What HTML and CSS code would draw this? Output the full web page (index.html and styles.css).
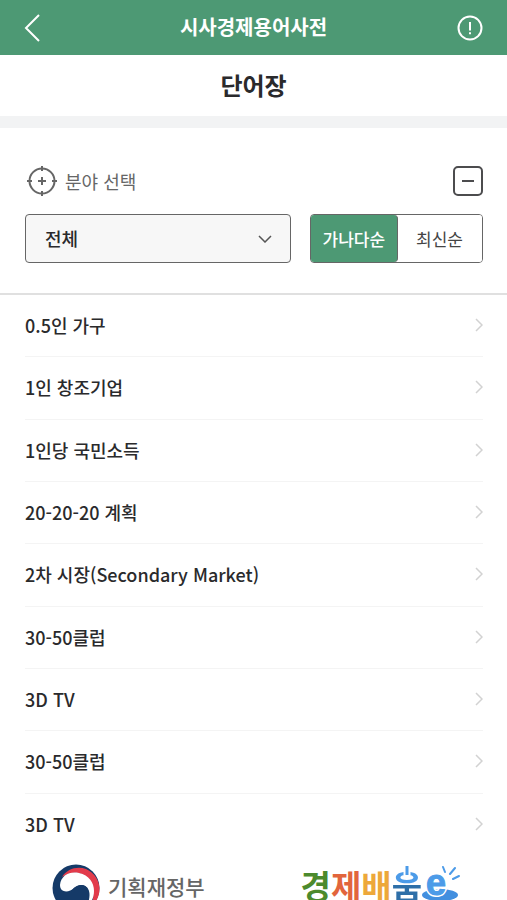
FILE: index.html
```html
<!DOCTYPE html>
<html lang="ko">
<head>
<meta charset="utf-8">
<meta name="viewport" content="width=device-width, initial-scale=1">
<title>시사경제용어사전</title>
<link rel="stylesheet" href="styles.css">
</head>
<body>
<header class="topbar">
  <button class="icon-button" type="button" aria-label="뒤로">
    <svg width="16" height="28" viewBox="0 0 16 28"><path d="M15 1 2 14 15 27"/></svg>
  </button>
  <h1 class="topbar-title">시사경제용어사전</h1>
  <button class="icon-button" type="button" aria-label="안내">
    <svg width="26" height="26" viewBox="0 0 26 26"><circle cx="13" cy="13" r="11.500"/><path d="M13 7v8.500M13 17.200v2"/></svg>
  </button>
</header>
<h2 class="page-title">단어장</h2>
<main class="content">
  <section class="filter">
    <div class="filter-head">
      <svg class="target" width="30" height="32" viewBox="0 0 30 32"><circle cx="15" cy="16" r="12.500"/><path d="M15 1v5M15 26v5M0 16h5M25 16h5M11 16h8M15 12v8"/></svg>
      <label class="filter-label" for="field">분야 선택</label>
      <button class="collapse" type="button" aria-label="접기">
        <svg width="12" height="2" viewBox="0 0 12 2"><path d="M0 1h12"/></svg>
      </button>
    </div>
    <div class="filter-controls">
      <div class="select-box">
        <select id="field" class="select"><option>전체</option></select>
        <svg class="select-arrow" width="14" height="8" viewBox="0 0 14 8"><path d="M1 1l6 6 6-6"/></svg>
      </div>
      <div class="sort">
        <button class="sort-option active" type="button" aria-pressed="true">가나다순</button>
        <button class="sort-option" type="button" aria-pressed="false">최신순</button>
      </div>
    </div>
  </section>
  <ul class="terms">
    <li class="term"><a class="term-link" href="#">0.5인 가구<svg class="chevron" width="8" height="14" viewBox="0 0 8 14"><path d="M1 1l6 6-6 6"/></svg></a></li>
    <li class="term"><a class="term-link" href="#">1인 창조기업<svg class="chevron" width="8" height="14" viewBox="0 0 8 14"><path d="M1 1l6 6-6 6"/></svg></a></li>
    <li class="term"><a class="term-link" href="#">1인당 국민소득<svg class="chevron" width="8" height="14" viewBox="0 0 8 14"><path d="M1 1l6 6-6 6"/></svg></a></li>
    <li class="term"><a class="term-link" href="#">20-20-20 계획<svg class="chevron" width="8" height="14" viewBox="0 0 8 14"><path d="M1 1l6 6-6 6"/></svg></a></li>
    <li class="term"><a class="term-link" href="#">2차 시장(Secondary Market)<svg class="chevron" width="8" height="14" viewBox="0 0 8 14"><path d="M1 1l6 6-6 6"/></svg></a></li>
    <li class="term"><a class="term-link" href="#">30-50클럽<svg class="chevron" width="8" height="14" viewBox="0 0 8 14"><path d="M1 1l6 6-6 6"/></svg></a></li>
    <li class="term"><a class="term-link" href="#">3D TV<svg class="chevron" width="8" height="14" viewBox="0 0 8 14"><path d="M1 1l6 6-6 6"/></svg></a></li>
    <li class="term"><a class="term-link" href="#">30-50클럽<svg class="chevron" width="8" height="14" viewBox="0 0 8 14"><path d="M1 1l6 6-6 6"/></svg></a></li>
    <li class="term"><a class="term-link" href="#">3D TV<svg class="chevron" width="8" height="14" viewBox="0 0 8 14"><path d="M1 1l6 6-6 6"/></svg></a></li>
  </ul>
</main>
<footer class="footer">
  <a class="ministry" href="#">
    <svg width="48" height="48" viewBox="0 0 48 48">
      <circle cx="24" cy="24" r="23.500" fill="#153a68"/>
      <path d="M10 13C15 5 25 2 34 5c9 4 13.500 12 13.500 20 0 7-3 13-8 17 3-10 2-20-3-27C31 8 20 6 10 13z" fill="#e23b4b"/>
      <path d="M8 21C9 11 18 7 27 9c10 2 15 10 15 18 0 7-3 12-7 16 2-7 4-13 1-18-3-5-9-5-14-1-5 5-14 5-14-3z" fill="#fff"/>
      <path d="M20 26c5-6 13-7 16-1 3 7-1 15-7 20l-9-4z" fill="#153a68"/>
    </svg>
    <span class="ministry-name">기획재정부</span>
  </a>
  <a class="learning" href="#">
    <span class="learning-name"><span class="green">경</span><span class="red">제</span><span class="yellow">배</span><span class="blue">움<svg class="power" width="8" height="10" viewBox="0 0 8 10"><path d="M4 0v10" stroke="#fff" stroke-width="7"/><path d="M4 0v9" stroke="#4c9be8" stroke-width="3"/></svg></span></span>
    <svg class="e-mark" width="38" height="42" viewBox="0 0 38 42">
      <ellipse cx="18" cy="31" rx="18" ry="6" fill="#428fdf"/>
      <text class="e-halo" x="4" y="31">e</text>
      <text class="e-letter" x="4" y="31">e</text>
      <path d="M23 8 21 3M28 10l5-6M31 15l6-3" fill="none" stroke="#4c9be8" stroke-width="2" stroke-linecap="round"/>
    </svg>
  </a>
</footer>
</body>
</html>
```
FILE: styles.css
```css
* {
  box-sizing: border-box;
}

body {
  margin: 0;
  height: 100vh;
  display: flex;
  flex-direction: column;
  background: #fff;
  color: #2a2a2c;
  font-family: "Noto Sans CJK KR", "Noto Sans", sans-serif;
  font-size: 18px;
  font-weight: 500;
  line-height: 24px;
}

button,
select {
  font: inherit;
  margin: 0;
}

svg {
  display: block;
  flex: none;
}

.topbar {
  display: flex;
  align-items: center;
  justify-content: space-between;
  flex: none;
  height: 55px;
  padding: 0 24px;
  background: #4d9974;
  color: #fff;
}

.topbar-title {
  margin: 0;
  padding-bottom: 2px;
  font-size: 20px;
  font-weight: 700;
}

.icon-button {
  display: flex;
  width: 26px;
  padding: 0;
  border: 0;
  background: none;
}

.icon-button svg {
  fill: none;
  stroke: #fff;
  stroke-width: 2;
}

.page-title {
  flex: none;
  margin: 0;
  padding: 15px 0 17px;
  border-bottom: 12px solid #f2f3f4;
  font-size: 24px;
  font-weight: 700;
  line-height: 29px;
  text-align: center;
}

.content {
  flex: 1;
  display: flex;
  flex-direction: column;
}

.filter {
  padding: 37px 24px 30px 25px;
  border-bottom: 2px solid #e0e0e0;
}

.filter-head {
  display: flex;
  align-items: center;
  gap: 8px;
  padding-left: 2px;
  margin-bottom: 17px;
}

.target {
  fill: none;
  stroke: #666;
  stroke-width: 2;
}

.filter-label {
  flex: 1;
  color: #666;
  font-weight: 400;
}

.collapse {
  display: flex;
  align-items: center;
  justify-content: center;
  width: 30px;
  height: 30px;
  padding: 0;
  border: 2px solid #4c4c4e;
  border-radius: 5px;
  background: #fff;
}

.collapse svg {
  stroke: #4c4c4e;
  stroke-width: 2;
}

.filter-controls {
  display: flex;
  gap: 19px;
}

.select-box {
  position: relative;
  flex: 1;
}

.select {
  width: 100%;
  height: 49px;
  padding: 0 19px 2px;
  border: 1px solid #666;
  border-radius: 4px;
  background: #f7f7f7;
  color: #2a2a2c;
  appearance: none;
}

.select-arrow {
  position: absolute;
  top: 21px;
  right: 19px;
  fill: none;
  stroke: #555;
  stroke-width: 1.5;
  pointer-events: none;
}

.sort {
  display: flex;
  height: 49px;
  border: 1px solid #666;
  border-radius: 4px;
  overflow: hidden;
}

.sort-option {
  padding: 0 19px 0 18px;
  border: 0;
  background: #fff;
  color: #444;
  font-size: 17px;
  font-weight: 400;
}

.sort-option.active {
  padding: 0 12px;
  border-right: 1px solid #666;
  border-radius: 0 4px 4px 0;
  background: #4d9974;
  color: #fff;
  font-weight: 500;
}

.terms {
  flex: 1;
  display: grid;
  grid-auto-rows: 1fr;
  margin: 0;
  padding: 0 24px 0 25px;
  list-style: none;
}

.term {
  display: flex;
  border-bottom: 1px solid #f4f4f4;
}

.term:last-child {
  border-bottom: 0;
}

.term-link {
  flex: 1;
  display: flex;
  align-items: center;
  justify-content: space-between;
  padding-bottom: 1px;
  color: inherit;
  text-decoration: none;
}

.chevron {
  fill: none;
  stroke: #d2d2d2;
  stroke-width: 1.5;
}

.footer {
  display: flex;
  align-items: flex-start;
  justify-content: space-between;
  flex: none;
  height: 44px;
  padding: 8px 47px 0 52px;
  overflow: hidden;
}

.ministry,
.learning {
  display: flex;
  text-decoration: none;
}

.ministry {
  gap: 8px;
  color: #666;
  font-size: 21px;
}

.ministry-name {
  padding-top: 10px;
}

.learning-name {
  display: flex;
  font-size: 33px;
  font-weight: 700;
  line-height: 42px;
}

.green {
  color: #4c8a2d;
}

.red {
  color: #e2653c;
}

.yellow {
  color: #eda83a;
}

.blue {
  position: relative;
  background: linear-gradient(#4c9be8 20px, #2e6fa8 20px);
  background-clip: text;
  color: transparent;
}

.power {
  position: absolute;
  top: 2px;
  left: 11px;
}

.e-letter,
.e-halo {
  fill: #4c9be8;
  stroke: #4c9be8;
  stroke-width: 1;
  font-family: "Liberation Sans", sans-serif;
  font-size: 36px;
  font-weight: 700;
}

.e-halo {
  stroke: #fff;
  stroke-width: 4;
}
```
